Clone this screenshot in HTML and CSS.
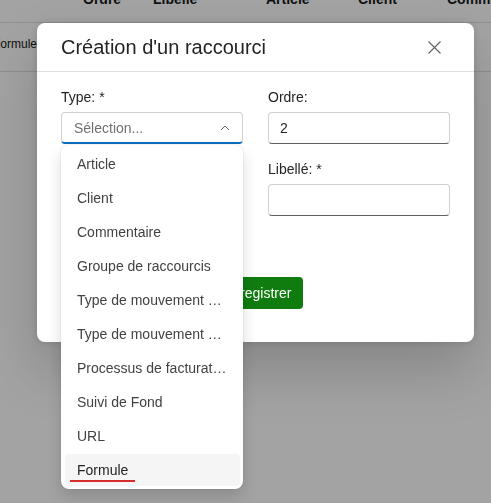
FILE: index.html
```html
<!DOCTYPE html>
<html lang="fr">
<head>
<meta charset="utf-8">
<title>Création d'un raccourci</title>
<link rel="stylesheet" href="styles.css">
</head>
<body>
<div class="page">
  <div class="grid head">
    <div class="cell"></div>
    <div class="cell">Ordre</div>
    <div class="cell">Libellé</div>
    <div class="cell">Article</div>
    <div class="cell">Client</div>
    <div class="cell">Commentaire</div>
  </div>
  <div class="grid row">
    <div class="cell">Formule</div>
  </div>
</div>
<div class="overlay"></div>
<div class="dialog">
  <div class="dialog-header">
    <h2 class="dialog-title">Création d'un raccourci</h2>
    <button class="close" aria-label="Fermer">
      <svg width="13" height="13" viewBox="0 0 13 13"><path d="M0.5 0.5 L12.5 12.5 M12.5 0.5 L0.5 12.5" stroke="#616161" stroke-width="1.1" fill="none"/></svg>
    </button>
  </div>
  <div class="dialog-body">
    <div class="fields">
      <div class="field">
        <label class="label">Type: *</label>
        <div class="select-wrap">
          <div class="select">
            <span class="placeholder">Sélection...</span>
            <svg class="chev" width="10" height="6" viewBox="0 0 10 6"><path d="M1 5 L5 1 L9 5" stroke="#616161" stroke-width="1" fill="none"/></svg>
          </div>
          <ul class="listbox">
            <li class="option">Article</li>
            <li class="option">Client</li>
            <li class="option">Commentaire</li>
            <li class="option">Groupe de raccourcis</li>
            <li class="option">Type de mouvement de stock</li>
            <li class="option">Type de mouvement de fonds</li>
            <li class="option">Processus de facturation</li>
            <li class="option">Suivi de Fond</li>
            <li class="option">URL</li>
            <li class="option active">Formule</li>
          </ul>
        </div>
      </div>
      <div class="field">
        <label class="label">Ordre:</label>
        <div class="input">2</div>
      </div>
      <div class="field"></div>
      <div class="field">
        <label class="label">Libellé: *</label>
        <div class="input"></div>
      </div>
    </div>
    <div class="footer">
      <button class="btn-primary">Enregistrer</button>
    </div>
  </div>
</div>
</body>
</html>
```
FILE: styles.css
```css
* { box-sizing: border-box; }
html, body { margin: 0; padding: 0; }
body {
  width: 491px;
  height: 503px;
  overflow: hidden;
  background: #ffffff;
  font-family: "Liberation Sans", Arial, sans-serif;
  color: #242424;
  position: relative;
}
.page {
  margin-top: -20px;
  margin-left: -7px;
}
.grid {
  display: grid;
  grid-template-columns: 90px 70px 113px 92px 89px 120px;
  border-bottom: 1px solid #e0e0e0;
}
.head {
  padding: 11px 0 15px;
  font-weight: 700;
  font-size: 14px;
  line-height: 16px;
  color: #1a1a1a;
}
.row {
  height: 49px;
  padding-top: 13px;
  font-size: 12px;
  line-height: 16px;
  color: #1a1a1a;
}
.cell { white-space: nowrap; }
.overlay {
  position: fixed;
  inset: 0;
  background: rgba(0, 0, 0, 0.36);
}
.dialog {
  position: absolute;
  left: 37px;
  top: 23px;
  width: 437px;
  background: #fff;
  border-radius: 8px;
  box-shadow: 0 0 8px rgba(0,0,0,0.14), 0 28px 56px rgba(0,0,0,0.18);
}
.dialog-header {
  height: 49px;
  border-bottom: 1px solid #e0e0e0;
  display: flex;
  align-items: center;
  justify-content: space-between;
  padding: 0 24px;
}
.dialog-title {
  margin: 0;
  font-size: 20px;
  font-weight: 400;
  line-height: 28px;
  color: #242424;
}
.close {
  width: 32px;
  height: 32px;
  border: 0;
  background: transparent;
  padding: 0;
  display: flex;
  align-items: center;
  justify-content: center;
}
.dialog-body {
  padding: 15px 24px 33px;
}
.fields {
  display: grid;
  grid-template-columns: 182px 182px;
  column-gap: 25px;
  row-gap: 15px;
}
.label {
  display: block;
  font-size: 14px;
  line-height: 20px;
  margin-bottom: 5px;
  color: #242424;
}
.select-wrap { position: relative; }
.select {
  height: 32px;
  border: 1px solid #d1d1d1;
  border-bottom: 2px solid #0f6cbd;
  border-radius: 4px;
  display: flex;
  align-items: center;
  justify-content: space-between;
  padding: 0 12px 0 12px;
}
.placeholder {
  font-size: 14px;
  color: #707070;
}
.chev { display: block; margin-top: 1px; }
.input {
  height: 32px;
  border: 1px solid #d1d1d1;
  border-bottom-color: #616161;
  border-radius: 4px;
  padding: 0 11px;
  font-size: 14px;
  line-height: 30px;
  color: #242424;
}
.listbox {
  position: absolute;
  top: 33px;
  left: 0;
  width: 182px;
  margin: 0;
  padding: 3px 0;
  list-style: none;
  background: #fff;
  border-radius: 8px;
  box-shadow: 0 0 2px rgba(0,0,0,0.12), 0 8px 16px rgba(0,0,0,0.14);
  z-index: 5;
  display: flex;
  flex-direction: column;
  gap: 2px;
}
.option {
  position: relative;
  flex: 0 0 32px;
  height: 32px;
  margin: 0 3px 0 4px;
  padding: 0 12px;
  border-radius: 4px;
  font-size: 14px;
  line-height: 32px;
  color: #424242;
  white-space: nowrap;
  overflow: hidden;
  text-overflow: ellipsis;
}
.option.active {
  background: #f5f5f5;
  color: #242424;
}
.option.active::after {
  content: "";
  position: absolute;
  left: 5px;
  width: 65px;
  bottom: 4px;
  height: 2px;
  background: #d92b2b;
}
.footer {
  margin-top: 61px;
  padding-left: 150px;
  display: flex;
}
.btn-primary {
  height: 32px;
  padding: 0 12px;
  border: 0;
  border-radius: 4px;
  background: #107c10;
  color: #fff;
  font-family: "Liberation Sans", Arial, sans-serif;
  font-size: 14px;
}
```
